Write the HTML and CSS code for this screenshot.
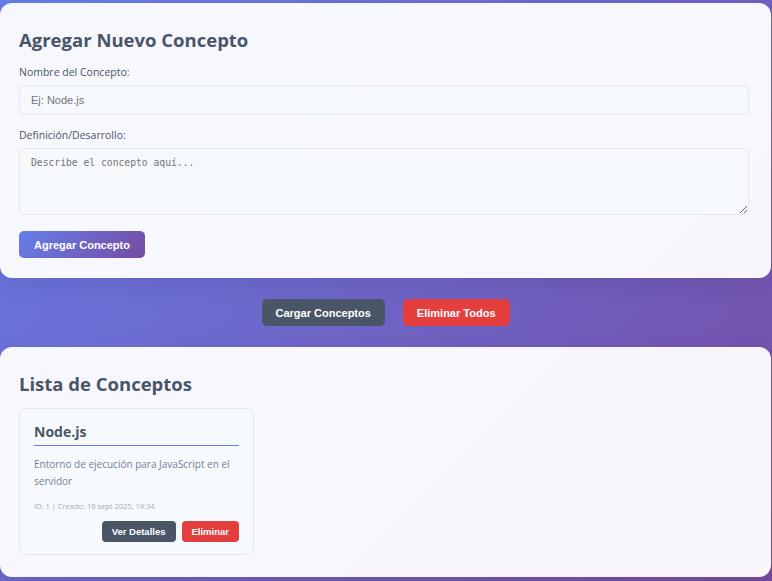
FILE: index.html
```html
<!DOCTYPE html>
<html lang="es">
<head>
<meta charset="utf-8">
<title>Conceptos</title>
<link rel="stylesheet" href="styles.css">
</head>
<body>
<div class="app">
  <section class="panel form-panel">
    <h2 class="panel-title">Agregar Nuevo Concepto</h2>
    <div class="field field-name">
      <label class="field-label" for="nombre">Nombre del Concepto:</label>
      <input class="text-input" id="nombre" type="text" placeholder="Ej: Node.js">
    </div>
    <div class="field">
      <label class="field-label" for="def">Definición/Desarrollo:</label>
      <textarea class="text-area" id="def" placeholder="Describe el concepto aquí..."></textarea>
    </div>
    <button class="btn btn-primary">Agregar Concepto</button>
  </section>

  <div class="actions">
    <button class="btn btn-dark">Cargar Conceptos</button>
    <button class="btn btn-danger">Eliminar Todos</button>
  </div>

  <section class="panel list-panel">
    <h2 class="panel-title">Lista de Conceptos</h2>
    <div class="cards">
      <article class="card">
        <h3 class="card-title">Node.js</h3>
        <p class="card-desc">Entorno de ejecución para JavaScript en el servidor</p>
        <p class="card-meta">ID: 1 | Creado: 16 sept 2025, 19:34</p>
        <div class="card-actions">
          <button class="btn-sm btn-dark">Ver Detalles</button>
          <button class="btn-sm btn-danger">Eliminar</button>
        </div>
      </article>
    </div>
  </section>
</div>
</body>
</html>
```

FILE: styles.css
```css
* { box-sizing: border-box; }

html, body {
  margin: 0;
  padding: 0;
}

body {
  min-height: 581px;
  background: linear-gradient(135deg, #667eea 0%, #764ba2 100%);
  font-family: "Open Sans", "Noto Sans", sans-serif;
  color: #4a5568;
}

.app {
  padding-top: 3px;
  width: 771px;
}

.panel {
  background: rgba(255, 255, 255, 0.95);
  border-radius: 12px;
  padding: 19px 22px 20px 19px;
  box-shadow: 0 8px 24px rgba(0, 0, 0, 0.08);
}

.form-panel {
  height: 275px;
}

.list-panel {
  height: 230px;
}

.panel-title {
  margin: 0 0 7px 0;
  font-size: 18.5px;
  font-weight: 700;
  line-height: 36px;
  color: #4a5568;
}

.list-panel .panel-title {
  margin-bottom: 6px;
}

.field {
  margin-bottom: 16px;
}

.field-name {
  margin-bottom: 13px;
}

.field-label {
  display: block;
  font-size: 10.5px;
  line-height: 14px;
  margin-bottom: 6px;
  color: #4a5568;
}

.text-input,
.text-area {
  display: block;
  width: 100%;
  border: 1px solid #e2e8f0;
  border-radius: 5px;
  background: #f5f9fc;
  padding: 0 11px;
  color: #4a5568;
  outline: none;
}

.text-input {
  height: 30px;
  font-family: "Liberation Sans", Arial, sans-serif;
  font-size: 11px;
}

.text-area {
  height: 67px;
  padding-top: 8px;
  font-family: "DejaVu Sans Mono", monospace;
  font-size: 9.7px;
  resize: vertical;
}

.text-input::placeholder,
.text-area::placeholder {
  color: #757575;
}

.btn {
  border: none;
  border-radius: 5px;
  height: 27px;
  padding: 0 14px;
  font-family: "Liberation Sans", Arial, sans-serif;
  font-size: 11px;
  font-weight: 700;
  color: #fff;
  cursor: pointer;
}

.btn-primary {
  background: linear-gradient(135deg, #667eea 0%, #764ba2 100%);
  padding: 0 15px;
}

.btn-dark { background: #4a5568; color: #fff; }
.btn-danger { background: #e53e3e; color: #fff; }

.actions {
  display: flex;
  justify-content: center;
  gap: 18px;
  padding: 21px 0;
}

.cards {
  display: grid;
  grid-template-columns: 235px;
}

.card {
  border: 1px solid #e2e8f0;
  border-radius: 8px;
  background: #f7fafc;
  padding: 13px 14px 13px 14px;
  height: 147px;
}

.card-title {
  margin: 0;
  font-size: 14px;
  font-weight: 700;
  line-height: 20px;
  padding-bottom: 3px;
  border-bottom: 1px solid #667eea;
  color: #4a5568;
}

.card-desc {
  margin: 10px 0 0 0;
  font-size: 10px;
  line-height: 17px;
  color: #718096;
}

.card-meta {
  margin: 10px 0 0 0;
  font-size: 7.5px;
  line-height: 12px;
  color: #a0aec0;
}

.card-actions {
  display: flex;
  justify-content: flex-end;
  gap: 6px;
  margin-top: 9px;
}

.btn-sm {
  border: none;
  border-radius: 4px;
  height: 21px;
  padding: 0 10px;
  font-family: "Liberation Sans", Arial, sans-serif;
  font-size: 9.5px;
  font-weight: 700;
  cursor: pointer;
}
```
